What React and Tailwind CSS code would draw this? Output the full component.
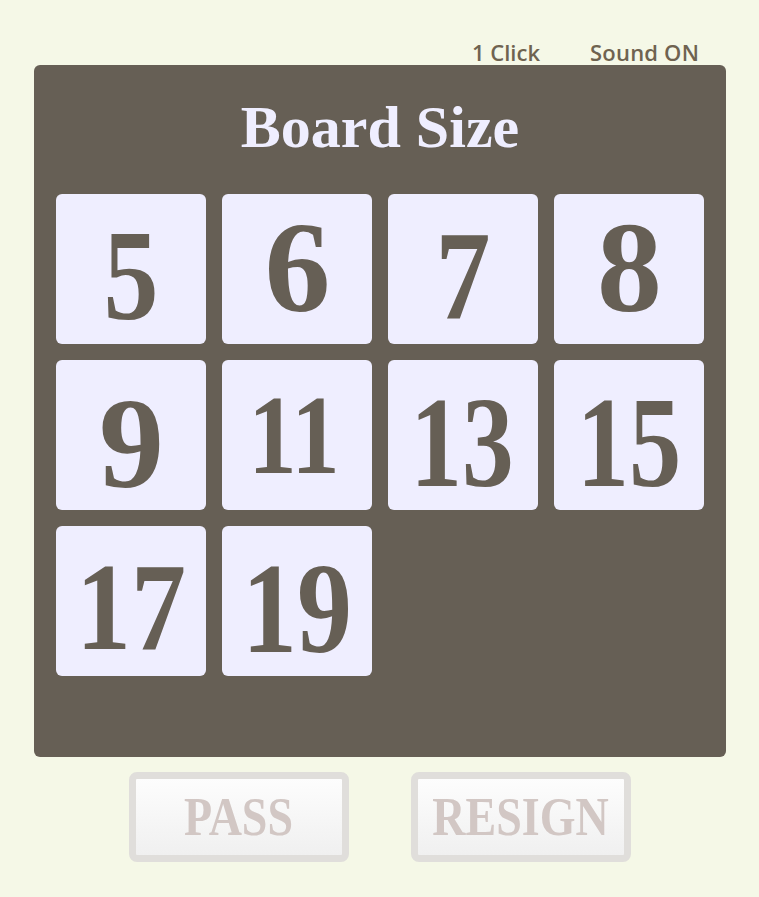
const sizes = [
  { n: 5, cls: "translate-y-[6px] scale-y-[1.18]" },
  { n: 6, cls: "-translate-y-[2px] scale-x-[1.2] scale-y-[1.18]" },
  { n: 7, cls: "translate-y-[7px] scale-y-[1.16]" },
  { n: 8, cls: "-translate-y-[2px] scale-x-[1.18] scale-y-[1.18]" },
  { n: 9, cls: "translate-y-[8px] scale-x-[1.18] scale-y-[1.18]" },
  { n: 11, cls: "-translate-x-[3px] scale-x-[0.88] scale-y-[1.02]" },
  { n: 13, cls: "translate-y-[7px] -translate-x-[1px] scale-x-[0.94] scale-y-[1.18]" },
  { n: 15, cls: "translate-y-[7px] scale-x-[0.95] scale-y-[1.18]" },
  { n: 17, cls: "translate-y-[6px] scale-y-[1.14]" },
  { n: 19, cls: "translate-y-[7px] scale-y-[1.18]" },
];
const serif = "font-['Liberation_Serif',serif] font-bold";

function Btn({ children }) {
  return (
    <div className="flex h-[90px] w-[220px] items-center justify-center rounded-lg border-[7px] border-[#e0dedb] bg-gradient-to-b from-[#fdfdfd] to-[#f0f0f0]">
      <span className={`${serif} inline-block scale-y-[1.2] text-[46px] leading-none text-[#d2c7c4]`}>{children}</span>
    </div>
  );
}

export default function App() {
  return (
    <div className="h-[897px] w-[759px] overflow-hidden bg-[#f5f8e7] pt-[38px]">
      <div className="flex h-[27px] items-center pl-[472px] font-['Open_Sans',sans-serif] text-[22px] font-semibold leading-none text-[#6f6350]">
        <span>1 Click</span>
        <span className="ml-[50px] tracking-[0.2px]">Sound ON</span>
      </div>
      <div className="ml-[34px] h-[692px] w-[692px] rounded-md bg-[#665f55] px-[22px]">
        <h1 className={`${serif} flex h-[123px] items-center justify-center text-[60px] leading-none text-[#efeeff] mb-[6px]`}>Board Size</h1>
        <div className="grid grid-cols-[repeat(4,150px)] gap-4">
          {sizes.map(({ n, cls }) => (
            <div key={n} className={`${serif} flex h-[150px] items-center justify-center rounded-md bg-[#efeeff] text-[110px] leading-none text-[#665f55]`}>
              <span className={`inline-block ${cls}`}>{n}</span>
            </div>
          ))}
        </div>
      </div>
      <div className="mt-[15px] flex justify-center gap-[62px]">
        <Btn>PASS</Btn>
        <Btn>RESIGN</Btn>
      </div>
    </div>
  );
}
